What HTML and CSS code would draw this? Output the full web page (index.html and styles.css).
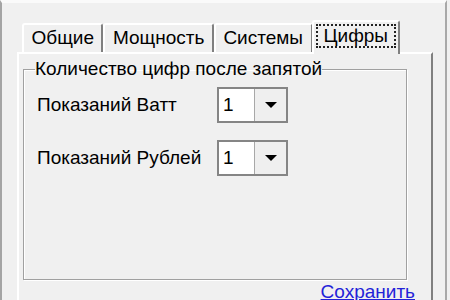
FILE: index.html
```html
<!DOCTYPE html>
<html lang="ru">
<head>
    <meta charset="UTF-8">
    <title>Настройки</title>
    <link rel="stylesheet" href="styles.css">
</head>
<body>
    <div class="window">
        <div class="tabs">
            <div class="tab">Общие</div>
            <div class="tab">Мощность</div>
            <div class="tab">Системы</div>
            <div class="tab active"><span class="focus">Цифры</span></div>
        </div>
        <div class="panel">
            <fieldset class="group">
                <legend>Количество цифр после запятой</legend>
                <div class="fields">
                    <label>Показаний Ватт</label>
                    <div class="combo"><span class="value">1</span><span class="drop"></span></div>
                    <label>Показаний Рублей</label>
                    <div class="combo"><span class="value">1</span><span class="drop"></span></div>
                </div>
            </fieldset>
            <div class="actions"><a href="#" class="save">Сохранить</a></div>
        </div>
    </div>
</body>
</html>
```

FILE: styles.css
```css
html, body {
    margin: 0;
    padding: 0;
    background: #f0f0f0;
    font-family: 'Liberation Sans', Arial, sans-serif;
    font-size: 19px;
    color: #000;
    overflow: hidden;
}
.window {
    box-sizing: border-box;
    width: 447px;
    height: 300px;
    border-top: 3px solid #fafafa;
    border-left: 2px solid #a4a4a4;
    border-right: 2px solid #a8a8a8;
    padding: 17px 0 0 15px;
}
.tabs {
    display: flex;
    align-items: flex-end;
    height: 34px;
    padding-left: 5px;
    margin-bottom: -2px;
    position: relative;
}
.tab {
    box-sizing: border-box;
    height: 29px;
    margin-bottom: 2px;
    padding: 2px 7.5px 0 7.5px;
    line-height: 22px;
    background: #f0f0f0;
    border-top: 2px solid #fff;
    border-left: 2px solid #fff;
    border-right: 2px solid #808080;
    border-radius: 3px 3px 0 0;
    white-space: nowrap;
}
.tab.active {
    height: 34px;
    margin: 0 0 0 -1px;
    padding: 2px 2px 0 2px;
}
.focus {
    display: inline-block;
    line-height: 20px;
    padding: 0 6px;
    border: 2px dotted #222;
}
.panel {
    box-sizing: border-box;
    width: 416px;
    height: 260px;
    padding: 4px 16px 0 4px;
    border-top: 2px solid #fff;
    border-left: 2px solid #fff;
    border-right: 2px solid #808080;
}
.group {
    margin: 0 8px 0 0;
    padding: 7px 0 103px 13px;
    border: 1px solid #a0a0a0;
    box-shadow: inset 1px 1px 0 #fff, 1px 1px 0 #fff;
}
.group legend {
    margin-left: -2px;
    padding: 0;
    line-height: 22px;
}
.fields {
    display: grid;
    grid-template-columns: 180px 71px;
    grid-auto-rows: 36px;
    row-gap: 17px;
    align-items: center;
}
.combo {
    box-sizing: border-box;
    height: 36px;
    display: flex;
    border: 2px solid #858585;
    background: #fff;
}
.combo .value {
    flex: 1;
    padding-left: 4px;
    line-height: 32px;
}
.combo .drop {
    width: 31px;
    border-left: 1px solid #a8a8a8;
    background: #efefef;
    display: flex;
    align-items: center;
    justify-content: center;
}
.combo .drop::after {
    content: "";
    border-left: 6px solid transparent;
    border-right: 6px solid transparent;
    border-top: 6px solid #000;
}
.actions {
    margin-top: 1px;
    text-align: right;
    line-height: 22px;
}
.save {
    color: #2323d8;
    text-decoration: underline;
}
```
